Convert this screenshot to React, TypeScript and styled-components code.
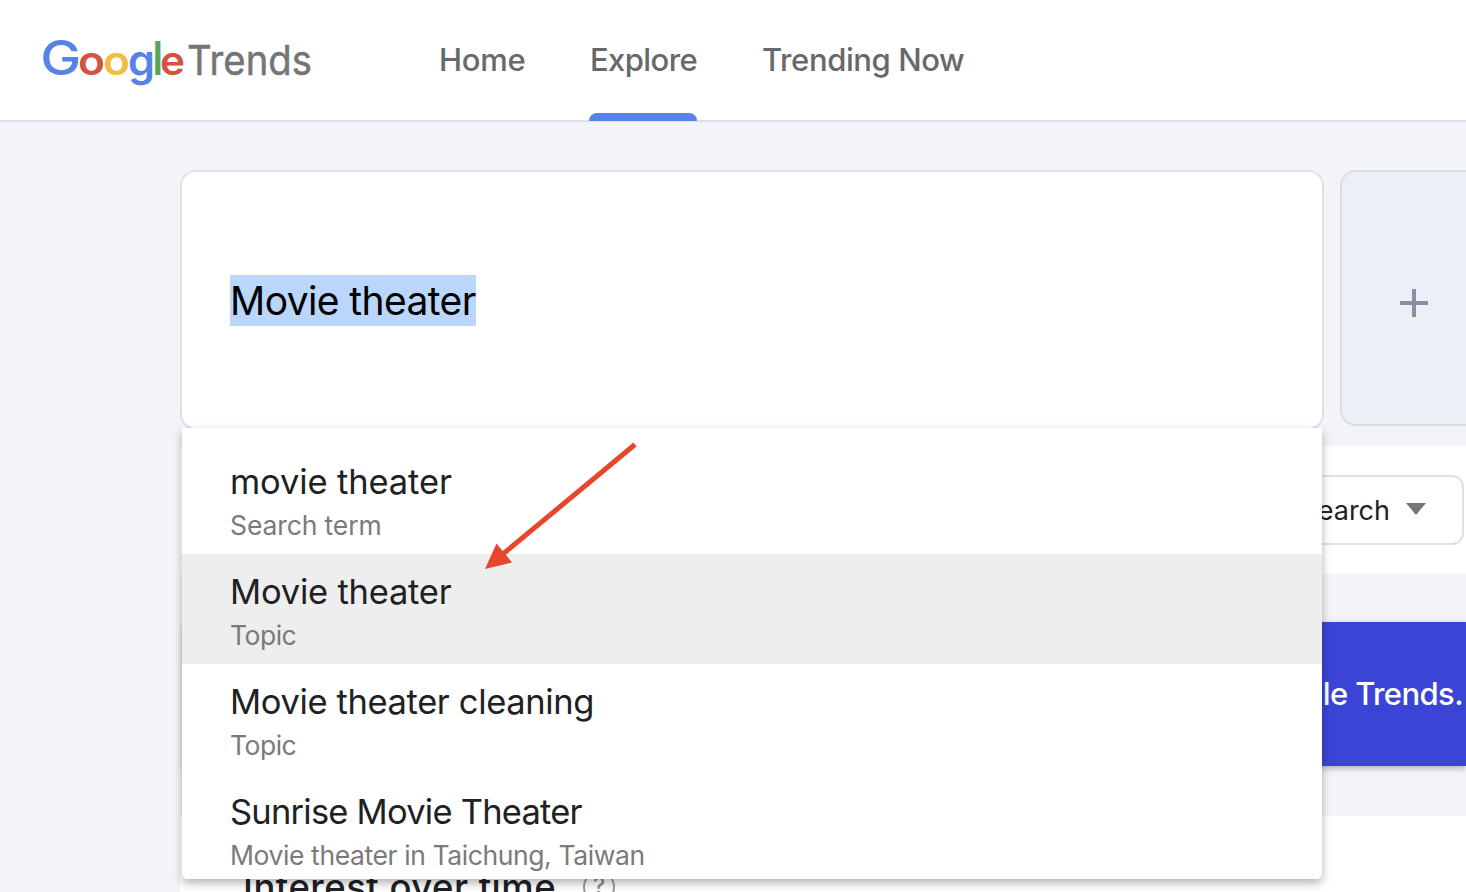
import React from 'react';
import styled, { createGlobalStyle } from 'styled-components';

const GlobalStyle = createGlobalStyle`
  * { box-sizing: border-box; }
  html, body { margin: 0; height: 100%; overflow: hidden; }
  body {
    background: #f2f4f9;
    font-family: Inter, Roboto, 'Liberation Sans', sans-serif;
    color: #202124;
  }
`;

const Page = styled.div`
  width: 100vw;
  height: 892px;
  overflow: hidden;
`;

const Header = styled.header`
  height: 122px;
  display: flex;
  align-items: stretch;
  padding-left: 40px;
  background: #fff;
  border-bottom: 2px solid #dfe0e4;
`;

const Logo = styled.svg`
  flex: none;
  width: 280px;
  height: 120px;
  margin-right: 118px;
`;

const Nav = styled.nav`
  display: flex;
  gap: 64px;
`;

const Tab = styled.a<{ $active?: boolean; $width: number; $spacing: number }>`
  position: relative;
  width: ${p => p.$width}px;
  padding-left: 1px;
  line-height: 119px;
  font-size: 31px;
  font-weight: 500;
  letter-spacing: ${p => p.$spacing}px;
  white-space: nowrap;
  color: #66686b;
  &::after {
    content: '';
    display: ${p => (p.$active ? 'block' : 'none')};
    position: absolute;
    left: 0;
    right: 0;
    bottom: -1px;
    height: 8px;
    border-radius: 8px 8px 0 0;
    background: #5583e8;
  }
`;

const Main = styled.main`
  padding: 48px 0 0 180px;
`;

const Terms = styled.section`
  display: flex;
  align-items: flex-start;
  gap: 16px;
  width: 1500px;
  height: 276px;
`;

const TermCard = styled.div`
  position: relative;
  width: 1144px;
  height: 260px;
  padding: 103px 48px 0;
  background: #fff;
  border: 2px solid #dfe1e5;
  border-radius: 16px;
`;

const Selected = styled.span`
  display: inline-block;
  width: 246px;
  height: 51px;
  line-height: 51px;
  font-size: 39px;
  letter-spacing: -0.6px;
  white-space: nowrap;
  background: #bad6fb;
  color: #000;
`;

const AddCard = styled.div`
  width: 340px;
  height: 256px;
  padding: 117px 0 0 58px;
  background: #ebeff6;
  border: 2px solid #dadde2;
  border-radius: 16px;
  svg { display: block; }
`;

const Menu = styled.ul`
  position: absolute;
  z-index: 2;
  left: 0;
  top: 256px;
  width: 1140px;
  height: 451px;
  margin: 0;
  padding: 16px 0 0;
  list-style: none;
  overflow: hidden;
  background: #fff;
  border-radius: 0 0 5px 5px;
  box-shadow: 0 4px 10px rgba(0, 0, 0, 0.3);
`;

const Option = styled.li<{ $active?: boolean }>`
  height: 110px;
  padding: 16px 48px 0;
  background: ${p => (p.$active ? '#eeeeee' : 'transparent')};
`;

const OptionTitle = styled.div<{ $spacing: number }>`
  height: 44px;
  line-height: 44px;
  font-size: 34.5px;
  letter-spacing: ${p => p.$spacing}px;
  white-space: nowrap;
  color: #202122;
`;

const OptionKind = styled.div<{ $spacing: number }>`
  height: 42px;
  line-height: 42px;
  font-size: 26.5px;
  letter-spacing: ${p => p.$spacing}px;
  white-space: nowrap;
  color: #7a7a7a;
`;

const Arrow = styled.svg`
  position: absolute;
  z-index: 3;
  left: 298px;
  top: 266px;
  width: 162px;
  height: 138px;
`;

const Filters = styled.section`
  display: flex;
  width: 1286px;
  height: 128px;
  justify-content: flex-end;
  align-items: center;
  padding-right: 2px;
  background: #fff;
`;

const Select = styled.div`
  display: flex;
  align-items: center;
  justify-content: flex-end;
  gap: 16px;
  width: 260px;
  height: 70px;
  padding-right: 36px;
  border: 2px solid #dfe0e2;
  border-radius: 12px;
  font-size: 27px;
  white-space: nowrap;
  svg { margin-top: -2px; }
`;

const Banner = styled.section`
  width: 1282px;
  height: 144px;
  margin: 48px 0 0 4px;
  padding-right: 3px;
  background: #3a45d6;
  box-shadow: 0 2px 6px rgba(0, 0, 0, 0.3);
  color: #fff;
  font-size: 31px;
  font-weight: 500;
  line-height: 144px;
  text-align: right;
  letter-spacing: -0.6px;
  white-space: nowrap;
`;

const Chart = styled.section`
  display: flex;
  align-items: flex-start;
  gap: 28px;
  width: 1286px;
  height: 120px;
  margin-top: 50px;
  padding: 48px 0 0 63px;
  background: #fff;
`;

const ChartTitle = styled.h2`
  margin: 0;
  width: 312px;
  font-size: 36.5px;
  font-weight: 450;
  line-height: 46px;
  letter-spacing: 0.48px;
  white-space: nowrap;
`;

const Help = styled.span`
  width: 32px;
  height: 32px;
  margin-top: 7px;
  border: 2.5px solid #9a9a9a;
  border-radius: 50%;
  color: #8a8a8a;
  font-size: 23px;
  font-weight: 500;
  line-height: 26px;
  text-align: center;
`;

const options = [
  { title: 'movie theater', kind: 'Search term', ts: -0.12, ks: -0.12 },
  { title: 'Movie theater', kind: 'Topic', ts: -0.22, ks: -0.5, active: true },
  { title: 'Movie theater cleaning', kind: 'Topic', ts: -0.37, ks: -0.5 },
  { title: 'Sunrise Movie Theater', kind: 'Movie theater in Taichung, Taiwan', ts: -0.78, ks: -0.4 },
];

const letters = [
  { ch: 'G', x: 0.3, y: 75, w: 41, size: 48, fill: '#5583e8', weight: 500 },
  { ch: 'o', x: 38, y: 75, w: 27, size: 40, fill: '#d2533f', weight: 600 },
  { ch: 'o', x: 63, y: 75, w: 27, size: 40, fill: '#eebf43', weight: 600 },
  { ch: 'g', x: 88, y: 76, w: 27, size: 44, fill: '#5583e8', weight: 600 },
  { ch: 'l', x: 112.5, y: 75, w: 10.5, size: 46, fill: '#57a55c', weight: 600 },
  { ch: 'e', x: 120, y: 75, w: 25, size: 40, fill: '#d2533f', weight: 600 },
];

export default function App() {
  return (
    <Page>
      <GlobalStyle />
      <Header>
        <Logo viewBox="0 0 280 120" aria-label="Google Trends">
          {letters.map((l, i) => (
            <text key={i} x={l.x} y={l.y} fontSize={l.size} fontWeight={l.weight} fill={l.fill}
              textLength={l.w} lengthAdjust="spacingAndGlyphs">{l.ch}</text>
          ))}
          <text x={147} y={75} fontSize={41.5} fill="#757575" stroke="#757575" strokeWidth={0.5}
            textLength={125} lengthAdjust="spacingAndGlyphs">Trends</text>
        </Logo>
        <Nav>
          <Tab $width={87} $spacing={-0.25}>Home</Tab>
          <Tab $width={108} $spacing={-0.6} $active>Explore</Tab>
          <Tab $width={202} $spacing={-0.4}>Trending Now</Tab>
        </Nav>
      </Header>
      <Main>
        <Terms>
          <TermCard>
            <Selected>Movie theater</Selected>
            <Menu>
              {options.map((o, i) => (
                <Option key={i} $active={o.active}>
                  <OptionTitle $spacing={o.ts}>{o.title}</OptionTitle>
                  <OptionKind $spacing={o.ks}>{o.kind}</OptionKind>
                </Option>
              ))}
            </Menu>
            <Arrow viewBox="480 438 162 138">
              <path d="M635 444.5 L503 554" stroke="#e8452b" strokeWidth="5" fill="none" />
              <path d="M485 569 L496.5 543.5 L512 562.5 Z" fill="#e8452b" />
            </Arrow>
          </TermCard>
          <AddCard>
            <svg width="28" height="28" viewBox="0 0 28 28">
              <path d="M14 0V28M0 14H28" stroke="#8a8ea5" strokeWidth="4" />
            </svg>
          </AddCard>
        </Terms>
        <Filters>
          <Select>
            Web Search
            <svg width="20" height="12" viewBox="0 0 20 12"><path d="M0 0H20L10 12Z" fill="#757575" /></svg>
          </Select>
        </Filters>
        <Banner>Welcome to the new Google Trends.</Banner>
        <Chart>
          <ChartTitle>Interest over time</ChartTitle>
          <Help>?</Help>
        </Chart>
      </Main>
    </Page>
  );
}
